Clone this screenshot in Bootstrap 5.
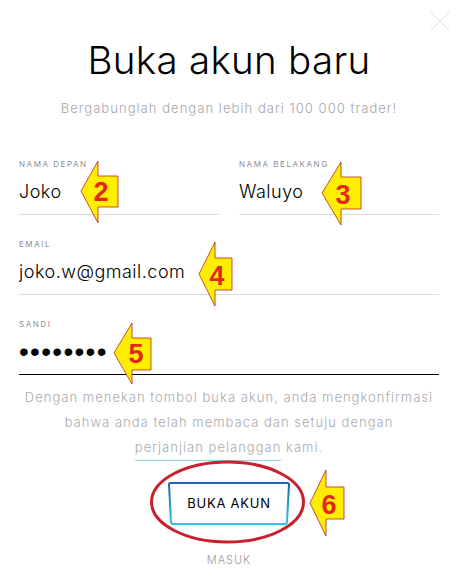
<!DOCTYPE html>
<html lang="id">
<head>
<meta charset="utf-8">
<title>Buka akun baru</title>
<link rel="stylesheet" href="https://cdn.jsdelivr.net/npm/bootstrap@5.3.0/dist/css/bootstrap.min.css">
<style>
html,body{height:582px;overflow:hidden;background:#fff}
body{font-family:Inter,"Liberation Sans",sans-serif;font-weight:300;position:relative;color:#000}
.sheet{padding:0 19px;height:582px}
.close-x{width:18px;height:18px;color:#d9d9d9;margin:12px -10px 0 0;padding:0;background:none}
.close-x svg{display:block}
.ttl{font-size:38.5px;font-weight:300;line-height:44px;margin:8px 0 0;letter-spacing:.3px}
.sub{font-size:13px;color:#a6a6aa;letter-spacing:1.05px;line-height:20px;margin:16px 0 0}
.namerow{gap:20px;margin-top:41px}
.fld{display:block}
.fld-lbl{display:block;font-size:8px;line-height:10px;letter-spacing:1.55px;color:#8e8e93;margin:0;font-weight:400}
.fld-in{border:0;border-bottom:1px solid #dcdcdc;border-radius:0;padding:0;height:46px;font-size:18px;font-weight:300;color:#000;letter-spacing:.5px;background:transparent;box-shadow:none}
.fld-in.pw{border-bottom-color:#000;font-size:28px;letter-spacing:1.3px;font-family:"DejaVu Sans",sans-serif;color:#000}
.rowgap{margin-top:24px}
.terms{font-size:13px;line-height:25px;color:#aaaaad;letter-spacing:1.02px;margin:10px -4px 0}
.terms a{color:#aaaaad;text-decoration:none;display:inline-block;line-height:25px;border-bottom:1px solid #8fd6e2}
.cta{width:122px;height:43px;margin-top:21px;font-size:13px;font-weight:400;letter-spacing:.75px;color:#000;background:none;padding:0;border:0}
.cta svg{left:0;top:0}
.cta-t{position:relative}
.login{font-size:11px;color:#9a9a9e;letter-spacing:1px;text-decoration:none;display:block;margin-top:28px;line-height:14px}
.overlay{left:0;top:0;pointer-events:none}
.num{font-family:"Liberation Sans",sans-serif;font-weight:700;font-size:27px;fill:#e3281b;text-anchor:middle}
.arr{fill:#ffee00;stroke:#b3261e;stroke-width:.8}
</style>
</head>
<body>
<div class="sheet">
  <div class="d-flex justify-content-end">
    <button class="btn close-x border-0" type="button" aria-label="Tutup">
      <svg width="18" height="18" viewBox="0 0 18 18"><path d="M0 0L18 18M18 0L0 18" stroke="#d9d9d9" stroke-width="1" fill="none"/></svg>
    </button>
  </div>
  <h1 class="ttl text-center">Buka akun baru</h1>
  <p class="sub text-center">Bergabunglah dengan lebih dari 100 000 trader!</p>
  <form>
    <div class="d-flex namerow">
      <label class="fld flex-fill w-50"><span class="fld-lbl">NAMA DEPAN</span>
        <input class="form-control fld-in" type="text" value="Joko"></label>
      <label class="fld flex-fill w-50"><span class="fld-lbl">NAMA BELAKANG</span>
        <input class="form-control fld-in" type="text" value="Waluyo"></label>
    </div>
    <label class="fld rowgap"><span class="fld-lbl">EMAIL</span>
      <input class="form-control fld-in" type="text" value="joko.w@gmail.com"></label>
    <label class="fld rowgap"><span class="fld-lbl">SANDI</span>
      <input class="form-control fld-in pw" type="password" value="12345678"></label>
  </form>
  <p class="terms text-center">Dengan menekan tombol buka akun, anda mengkonfirmasi<br>bahwa anda telah membaca dan setuju dengan<br><a href="#">perjanjian pelanggan</a> kami.</p>
  <div class="text-center">
    <button class="btn cta position-relative" type="button">
      <svg class="position-absolute" width="122" height="43" viewBox="0 0 122 43">
        <defs><linearGradient id="g" x1="0" y1="0" x2="0" y2="1"><stop offset="0" stop-color="#1f63ad"/><stop offset="1" stop-color="#2fc3e6"/></linearGradient></defs>
        <path d="M2.5 1H119.500Q121 1 121 2.500L119 40Q118.800 42 117 42H5Q3.200 42 3 40L1 2.500Q1 1 2.500 1Z" fill="none" stroke="url(#g)" stroke-width="2"/>
      </svg>
      <span class="cta-t">BUKA AKUN</span>
    </button>
    <a class="login" href="#">MASUK</a>
  </div>
</div>
<svg class="overlay position-absolute" width="458" height="582" viewBox="0 0 458 582">
  <ellipse cx="227.500" cy="502" rx="76" ry="40" fill="none" stroke="#c9202e" stroke-width="3"/>
  <polygon class="arr" points="81,191 98,161 98,176 118,176 118,207 98,207 98,223"/>
  <text class="num" x="101" y="201">2</text>
  <polygon class="arr" points="322,193 341,162 341,177 361,177 361,209 341,209 341,225"/>
  <text class="num" x="343" y="204">3</text>
  <polygon class="arr" points="199,274 215,242 215,258 232,258 232,290 215,290 215,306"/>
  <text class="num" x="217" y="285">4</text>
  <polygon class="arr" points="114,353 132,323 132,338 151,338 151,370 132,370 132,384"/>
  <text class="num" x="136" y="363">5</text>
  <polygon class="arr" points="310,503 326,470 326,487 344,487 344,519 326,519 326,536"/>
  <text class="num" x="329" y="514">6</text>
</svg>
</body>
</html>
